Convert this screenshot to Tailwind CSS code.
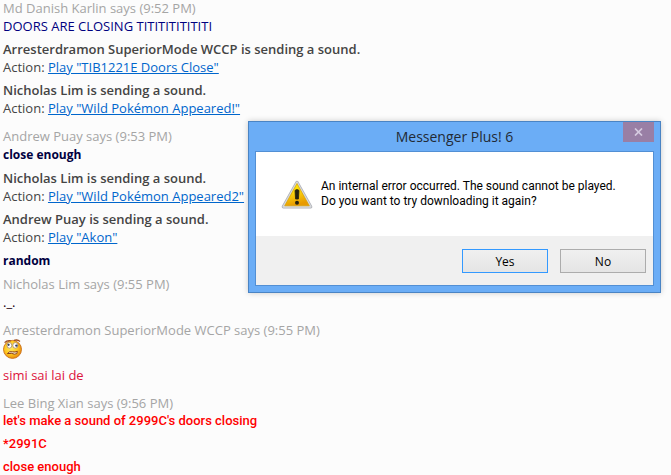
<!DOCTYPE html>
<html lang="en">
<head>
    <meta charset="UTF-8">
    <meta name="viewport" content="width=device-width, initial-scale=1.0">
    <title>Conversation</title>
    <script src="https://cdn.jsdelivr.net/npm/@tailwindcss/browser@4"></script>
</head>
<body class="relative min-h-screen overflow-hidden bg-[#fcfcfc] font-['Open_Sans','Noto_Sans',sans-serif] text-[13px] leading-[18px] text-[#444444]">
    <!-- Conversation log -->
    <main class="-mt-px flex flex-col gap-[10px] px-[3px]">
        <section class="flex flex-col gap-[5px]">
            <div>
                <h2 class="text-[#a5a5a5]">Md Danish Karlin says (9:52 PM)</h2>
                <p class="text-[#000080]">DOORS ARE CLOSING TITITITITITITI</p>
            </div>
            <div>
                <p class="font-semibold">Arresterdramon SuperiorMode WCCP is sending a sound.</p>
                <p>Action: <a href="#" class="text-[#0066cc] underline">Play "TIB1221E Doors Close"</a></p>
            </div>
            <div>
                <p class="font-semibold">Nicholas Lim is sending a sound.</p>
                <p>Action: <a href="#" class="text-[#0066cc] underline">Play "Wild Pokémon Appeared!"</a></p>
            </div>
        </section>

        <section class="flex flex-col gap-[5px]">
            <div>
                <h2 class="text-[#a5a5a5]">Andrew Puay says (9:53 PM)</h2>
                <p class="text-[12px] leading-[19px] font-bold text-[#000040]">close enough</p>
            </div>
            <div>
                <p class="font-semibold">Nicholas Lim is sending a sound.</p>
                <p>Action: <a href="#" class="text-[#0066cc] underline">Play "Wild Pokémon Appeared2"</a></p>
            </div>
            <div>
                <p class="font-semibold">Andrew Puay is sending a sound.</p>
                <p>Action: <a href="#" class="text-[#0066cc] underline">Play "Akon"</a></p>
            </div>
            <p class="text-[12px] leading-[19px] font-bold text-[#000040]">random</p>
            <div>
                <h2 class="text-[#a5a5a5]">Nicholas Lim says (9:55 PM)</h2>
                <p class="text-[#200010]">._.</p>
            </div>
        </section>

        <section class="flex flex-col gap-[7px]">
            <div>
                <h2 class="text-[#a5a5a5]">Arresterdramon SuperiorMode WCCP says (9:55 PM)</h2>
                <svg class="block h-[20px] w-[20px]" viewBox="0 0 20 20" role="img" aria-label="Worried">
                    <defs>
                        <radialGradient id="face" cx="42%" cy="40%" r="62%">
                            <stop offset="0" stop-color="#ffee66" />
                            <stop offset="0.6" stop-color="#ffc61e" />
                            <stop offset="1" stop-color="#ea8a0c" />
                        </radialGradient>
                    </defs>
                    <circle cx="9.5" cy="10.4" r="9" fill="url(#face)" stroke="#c8701c" stroke-width="0.9" />
                    <ellipse cx="6.4" cy="6.4" rx="2.4" ry="2.8" fill="#fff" stroke="#9a7a5a" stroke-width="0.7" />
                    <ellipse cx="12.4" cy="6.4" rx="2.6" ry="2.8" fill="#fff" stroke="#9a7a5a" stroke-width="0.7" />
                    <circle cx="5.6" cy="5.8" r="1.1" fill="#39415c" />
                    <circle cx="13.4" cy="6.6" r="1.2" fill="#39415c" />
                    <path d="M1.6 3.6Q4 1.2 7.8 1.8M11 1.4Q14.6 .2 17 2.4" fill="none" stroke="#9a4a1c" stroke-width="1.3" />
                    <path d="M4.4 14.6Q6.4 11.8 9.4 12.8Q12 13.4 14.4 12.4Q14.6 15.4 11.6 15.2Q8.6 13.8 4.4 14.6Z" fill="#fff3dc" stroke="#8a3f12" stroke-width="1" />
                </svg>
            </div>
            <p class="text-[#dc143c]">simi sai lai de</p>
        </section>

        <section class="flex flex-col gap-[5px]">
            <div>
                <h2 class="text-[#a5a5a5]">Lee Bing Xian says (9:56 PM)</h2>
                <p class="font-['Roboto',sans-serif] font-medium text-[#ff0000]">let's make a sound of 2999C's doors closing</p>
            </div>
            <p class="font-['Roboto',sans-serif] font-medium text-[#ff0000]">*2991C</p>
            <p class="font-['Roboto',sans-serif] font-medium text-[#ff0000]">close enough</p>
        </section>
    </main>

    <!-- Message box -->
    <div role="dialog" aria-labelledby="dialog-title" class="absolute top-[121px] right-[10px] left-[248px] border border-[#4a84c4] bg-[#6badf6] px-[6px] pb-[6px] shadow-[0_0_6px_rgba(0,0,0,0.2)]">
        <header class="grid h-[29px] grid-cols-[1fr_auto_1fr] items-center">
            <h1 id="dialog-title" class="col-start-2 text-[14px] leading-5 text-[#222a35]">Messenger Plus! 6</h1>
            <button type="button" aria-label="Close" class="flex h-5 w-[31px] items-center justify-center self-start justify-self-end bg-[#997fa5]">
                <svg class="h-[8px] w-[9px]" viewBox="0 0 9 8"><path d="M1 .5L8 7.5M8 .5L1 7.5" stroke="#d6cbe0" stroke-width="1.7" /></svg>
            </button>
        </header>
        <div class="border border-[#528fd4] bg-white text-[12px] leading-[15px] text-black">
            <div class="flex h-[84px] items-center gap-2 pl-[25px]">
                <svg class="h-8 w-8 shrink-0" viewBox="0 0 32 32" aria-hidden="true">
                    <defs>
                        <linearGradient id="warn" x1="0" y1="0" x2="0.3" y2="1">
                            <stop offset="0" stop-color="#fff200" />
                            <stop offset="0.5" stop-color="#fbd30c" />
                            <stop offset="1" stop-color="#e89a00" />
                        </linearGradient>
                    </defs>
                    <path d="M16 4.5L29.6 28.8H2.4Z" fill="#c6c8cc" stroke="#b0b2b8" stroke-width="3.5" stroke-linejoin="round" />
                    <path d="M16 4.5L29.6 28.8H2.4Z" fill="#d7d9dc" stroke="#d7d9dc" stroke-width="1.8" stroke-linejoin="round" />
                    <path d="M16 5.5L28.3 27.8H3.7Z" fill="url(#warn)" stroke="#d9a000" stroke-width="0.7" stroke-linejoin="round" />
                    <path d="M14 12.4Q16 10.8 18 12.4L17.4 21H14.6Z" fill="#25220f" stroke="#25220f" stroke-width="0.8" />
                    <circle cx="16" cy="24.8" r="2" fill="#25220f" />
                </svg>
                <p class="font-['Roboto',sans-serif]">An internal error occurred. The sound cannot be played.<br>Do you want to try downloading it again?</p>
            </div>
            <footer class="flex justify-end gap-3 bg-[#f0f0f0] pt-[13px] pr-[7px] pb-[12px]">
                <button type="button" class="h-6 w-[86px] border border-[#3399ff] bg-linear-to-b from-[#f0f0f0] to-[#e5e5e5]">Yes</button>
                <button type="button" class="h-6 w-[86px] border border-[#acacac] bg-linear-to-b from-[#f0f0f0] to-[#e5e5e5]">No</button>
            </footer>
        </div>
    </div>
</body>
</html>
